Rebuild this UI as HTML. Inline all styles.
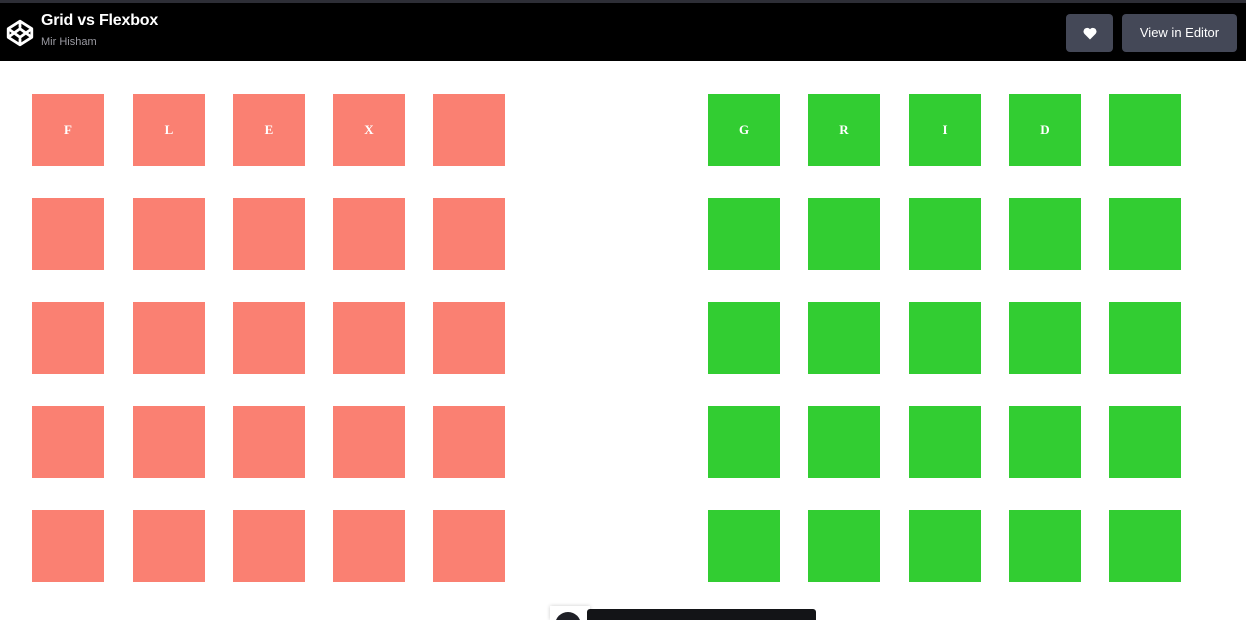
<!DOCTYPE html>
<html style="overflow:hidden;height:620px"><head><style>
body{margin:0;width:1246px;height:620px;overflow:hidden;background:#fff;position:relative;font-family:"Liberation Sans",sans-serif}
.top{position:absolute;left:0;top:0;width:1246px;height:3px;background:#2d2e36}
.hdr{position:absolute;left:0;top:3px;width:1246px;height:58px;background:#000}
.t{position:absolute;left:41px;top:12px;color:#fff;font-weight:bold;font-size:16px;letter-spacing:-0.2px}
.s{position:absolute;left:41px;top:36px;color:#9a9aa2;font-size:11px}
.btn{position:absolute;top:14px;height:38px;background:#444857;border-radius:4px;color:#fff;font-size:13px;line-height:38px;text-align:center}
.b{position:absolute;width:72px;height:72px;color:#fff;font-family:"Liberation Serif",serif;font-weight:bold;font-size:13px;line-height:72px;text-align:center}
.r{background:#fa8072}.g{background:#32cd32}
</style></head><body>
<div class="top"></div><div class="hdr"></div>
<svg style="position:absolute;left:5px;top:18px" width="30" height="30" viewBox="0 0 28 28" fill="none" stroke="#fff" stroke-width="2.6" stroke-linejoin="round"><path d="M14 3L25 10V18L14 25L3 18V10Z"/><path d="M14 3V9M14 19V25M3 10L14 18L25 10M3 18L14 10L25 18"/></svg>
<div class="t">Grid vs Flexbox</div><div class="s">Mir Hisham</div>
<div class="btn" style="left:1066px;width:47px"><svg width="14" height="13" viewBox="0 0 14 13" style="vertical-align:middle"><path d="M7 12.5L1.3 6.8A3.3 3.3 0 0 1 7 2.2A3.3 3.3 0 0 1 12.7 6.8Z" fill="#fff"/></svg></div>
<div class="btn" style="left:1122px;width:115px">View in Editor</div>
<div id="c"></div>
<div style="position:absolute;left:550px;top:606px;width:40px;height:14px;background:#fff;box-shadow:0 0 4px rgba(0,0,0,.2);overflow:hidden"><div style="position:absolute;left:5px;top:6px;width:26px;height:26px;border-radius:50%;background:#1e1f26"></div></div>
<div style="position:absolute;left:587px;top:609px;width:229px;height:11px;background:#131417;border-radius:3px 3px 0 0"></div>
<script>
var xs=[32,133,233,333,433],gx=[708,808,909,1009,1109],ys=[94,198,302,406,510],L=['F','L','E','X',''],G=['G','R','I','D',''],h='';
ys.forEach(function(y,ri){xs.forEach(function(x,i){h+='<div class="b r" style="left:'+x+'px;top:'+y+'px">'+(ri?'':L[i])+'</div>'});gx.forEach(function(x,i){h+='<div class="b g" style="left:'+x+'px;top:'+y+'px">'+(ri?'':G[i])+'</div>'})});
document.getElementById('c').innerHTML=h;
</script>
</body></html>
